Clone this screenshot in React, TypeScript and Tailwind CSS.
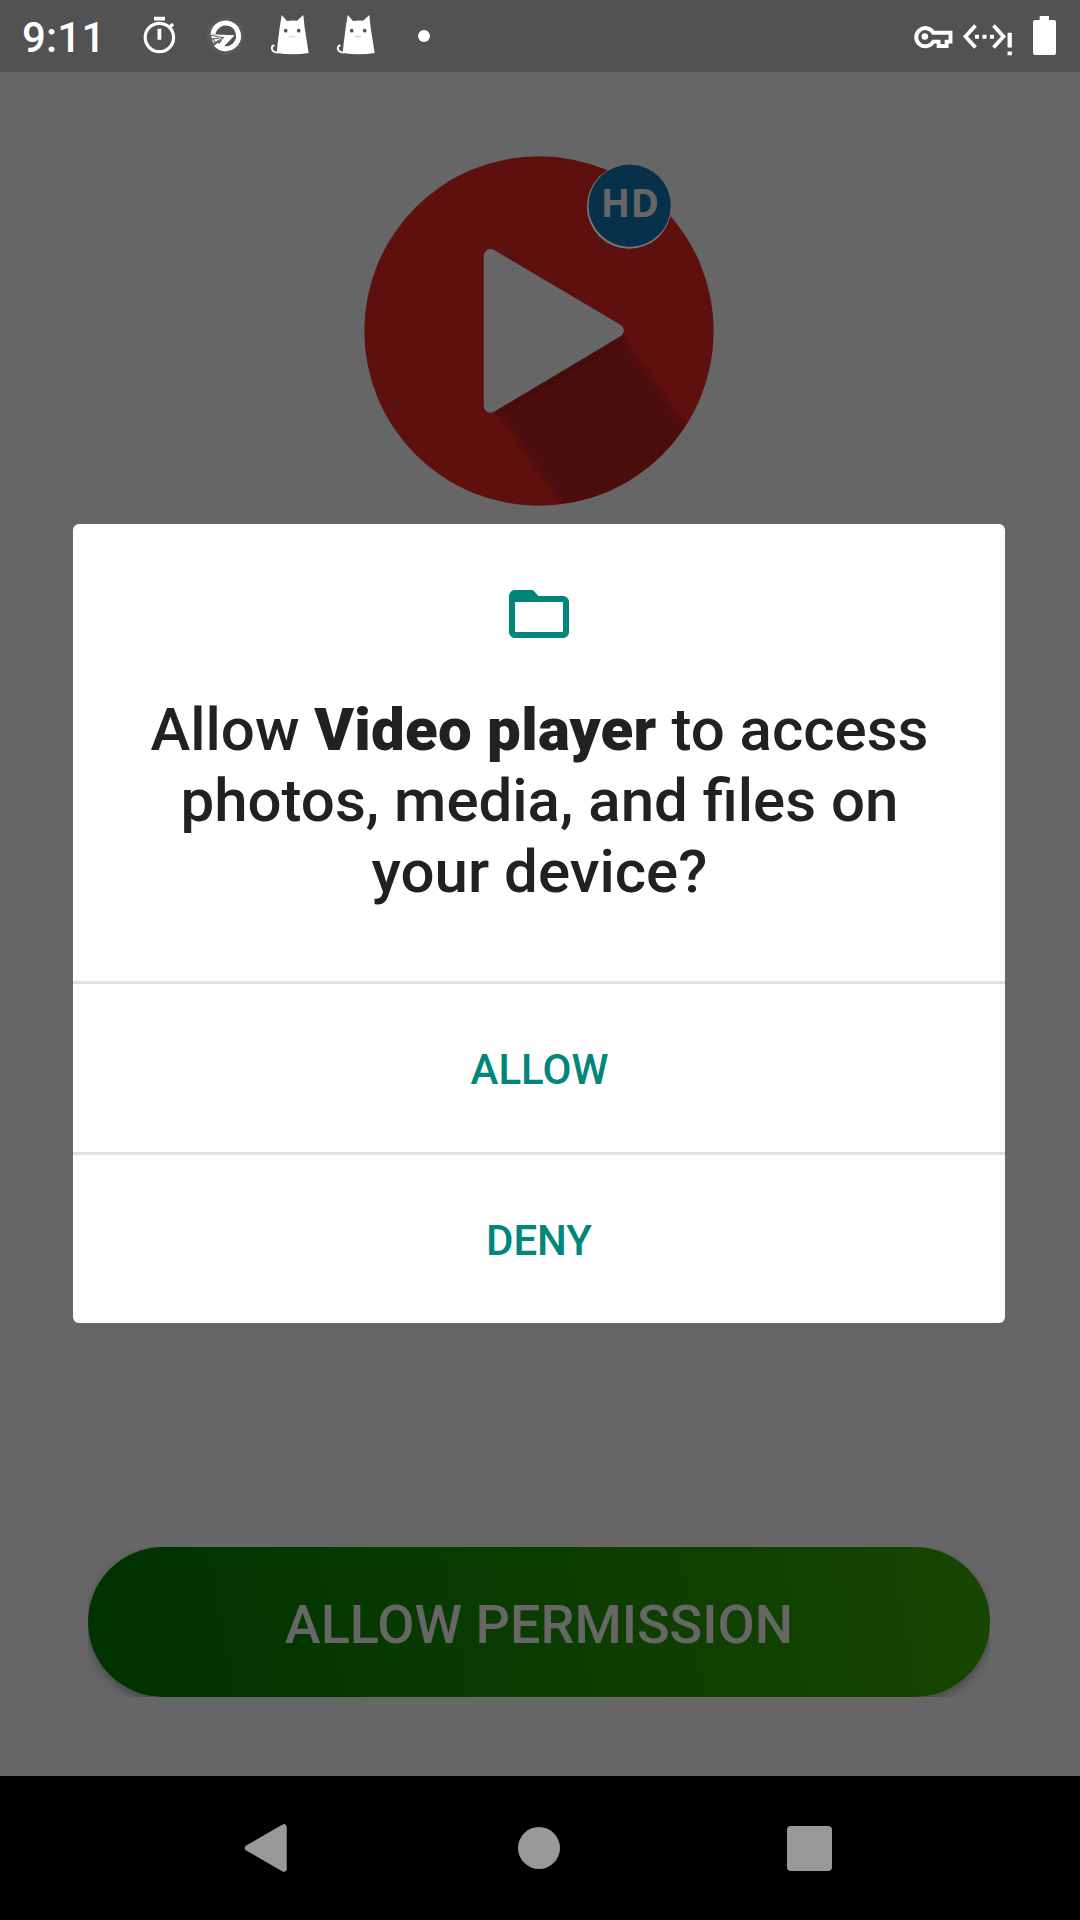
function Cat() {
  return (
    <svg className="h-[44px] w-[40px] shrink-0" viewBox="240 40 120 132">
      <path
        d="M264 158C250 160 243 150 246 142Q248 137 251 138"
        fill="none"
        stroke="#fff"
        strokeWidth="6"
        strokeLinecap="round"
      />
      <path
        d="M275 46L291 64Q306 61 321 63L340 46L344 84L356 160Q310 168 260 160Q264 120 269 84Z"
        fill="#fff"
      />
      <circle cx="287" cy="93" r="5.500" fill="#525252" />
      <circle cx="326" cy="93" r="5.500" fill="#525252" />
      <path d="M298 112Q302 109 307 111Q312 109 316 112" fill="none" stroke="#d4d4d4" strokeWidth="4" />
    </svg>
  );
}

function StatusBar() {
  return (
    <header className="flex h-[72px] shrink-0 items-start bg-[#525252] text-white">
      <span className="ml-[22px] mt-[13px] w-[80px] whitespace-nowrap text-[42px] font-medium leading-[49px] tracking-[0.2px]">
        9:11
      </span>
      <svg className="ml-[36px] mt-[15px] h-[42px] w-[42px] shrink-0" viewBox="0 0 42 42" fill="none" stroke="#fff">
        <circle cx="21.400" cy="22.500" r="14.200" strokeWidth="3.200" />
        <path d="M16 3.700H27M21.400 13.800V24.800" strokeWidth="3.800" />
        <path d="M31 13L35 9" strokeWidth="3.200" />
      </svg>
      <svg className="ml-[25px] mt-[15px] h-[42px] w-[42px] shrink-0 overflow-visible" viewBox="45 45 126 126">
        <defs>
          <radialGradient id="halo">
            <stop offset="0.6" stopColor="#fff" stopOpacity="0.1" />
            <stop offset="1" stopColor="#fff" stopOpacity="0" />
          </radialGradient>
        </defs>
        <circle cx="107" cy="108" r="62" fill="url(#halo)" />
        <circle cx="107" cy="108" r="32" fill="#525252" />
        <path d="M69 102A38.500 38.500 0 1 1 78 133" fill="none" stroke="#fff" strokeWidth="15" />
        <path d="M60 103L134 106L101 140L80 141L99 117L70 131L66 115Z" fill="#fff" />
        <path d="M60 106L101 113L68 131M66 117L88 115M70 117L74 126" fill="none" stroke="#525252" strokeWidth="3" />
      </svg>
      <div className="ml-[23px] mt-[13px] flex gap-[26px]">
        <Cat />
        <Cat />
      </div>
      <span className="ml-[42px] mt-[30px] h-3 w-3 rounded-full bg-white" />
      <svg className="ml-auto mt-[12px] h-[48px] w-[152px] shrink-0" viewBox="10 12 152 48" fill="none" stroke="#fff">
        <path d="M33.300 32.800H50.500V41.600H46.600V46H38.600V41.600H33.300A9.100 9.100 0 1 1 33.300 32.800Z" strokeWidth="3.900" />
        <circle cx="24.800" cy="36.500" r="3.200" fill="#fff" stroke="none" />
        <path d="M75.500 25.500L65.500 36.500L75.500 47.500M93.500 25.500L103.500 36.500L93.500 47.500" strokeWidth="3.800" />
        <path d="M75 36.700H79M82.500 36.700H86.500M90 36.700H94" strokeWidth="4" />
        <path d="M109.700 32.700V47.500M109.700 51.500V55.200" strokeWidth="4.300" />
        <path
          d="M139.700 16H149V20H154Q156 20 156 22V53Q156 55 154 55H135Q133 55 133 53V22Q133 20 135 20H139.700Z"
          fill="#fff"
          stroke="none"
        />
      </svg>
      <span className="w-[18px] shrink-0" />
    </header>
  );
}

function Logo() {
  return (
    <svg className="h-[360px] w-[360px]" viewBox="359 151 360 360">
      <defs>
        <clipPath id="disc">
          <circle cx="539" cy="331" r="174.700" />
        </clipPath>
        <filter id="soft" x="-20%" y="-20%" width="140%" height="140%">
          <feGaussianBlur stdDeviation="1.500" />
        </filter>
      </defs>
      <circle cx="539" cy="331" r="174.700" fill="#5e100e" />
      <g clipPath="url(#disc)">
        <path d="M496 408L622 336L699 446L640 540L587 540Z" fill="#4c0d10" filter="url(#soft)" />
        <path d="M494 413L623 337" stroke="#3f0a0d" strokeWidth="4" filter="url(#soft)" />
      </g>
      <path d="M490.500 255.700L617 330.500L490.500 406Z" fill="#666" stroke="#666" strokeWidth="13.500" strokeLinejoin="round" />
      <circle cx="629.200" cy="206.500" r="42.300" fill="#767676" />
      <circle cx="629.700" cy="205.700" r="41.200" fill="#07304b" />
      <text
        x="630"
        y="217"
        textAnchor="middle"
        fill="#666"
        className="font-['Noto_Sans'] text-[38.5px] font-bold tracking-[0.4px]"
      >
        HD
      </text>
    </svg>
  );
}

function PermissionDialog() {
  return (
    <section
      role="dialog"
      className="absolute left-[73.33px] top-[524px] flex h-[799px] w-[931.33px] flex-col overflow-hidden rounded-[6px] bg-white"
    >
      <div className="flex h-[457px] flex-col items-center">
        <svg className="mt-[54px] h-[72px] w-[72px] shrink-0" viewBox="0 0 24 24" fill="#00867a">
          <path d="M9.700 4H4c-1.100 0-1.990.9-1.990 2L2 18c0 1.100.9 2 2 2h16c1.100 0 2-.9 2-2V8c0-1.100-.9-2-2-2h-8.170L10.300 4.300Q10 4 9.700 4zM20 18H4V8h16z" />
        </svg>
        <h1 className="mt-[44px] pl-[1px] text-center text-[60px] font-medium leading-[71px] text-[#212121]">
          Allow <b className="font-black tracking-[0.25px]">Video player</b> to access
          <br />
          photos, media, and files on
          <br />
          your device?
        </h1>
      </div>
      <button className="h-[171px] border-t-[3px] border-[#e0e0e0] pl-[1px] pt-[2px] text-[42px] font-medium text-[#00867a]">
        ALLOW
      </button>
      <button className="h-[171px] border-t-[3px] border-[#e0e0e0] pt-[2px] text-[42px] font-medium text-[#00867a]">
        DENY
      </button>
    </section>
  );
}

export default function App() {
  return (
    <div className="relative flex h-[1920px] w-[1080px] flex-col overflow-hidden bg-[#666] font-[Roboto,sans-serif]">
      <StatusBar />
      <main className="flex flex-1 flex-col items-center pt-[79px]">
        <div className="mr-[2px]">
          <Logo />
        </div>
        <div className="mb-[79px] mr-[2px] mt-auto h-[150px] w-[902px] overflow-hidden">
          <button className="h-[150px] w-[902px] rounded-full bg-[linear-gradient(80deg,#003300_6%,#174600_98%)] pt-[4px] text-[54px] font-medium text-[#666] shadow-[0_4px_8px_0_rgba(0,0,0,0.3)]">
            ALLOW PERMISSION
          </button>
        </div>
      </main>
      <nav className="flex h-[144px] shrink-0 items-center bg-black">
        <svg className="ml-[244px] h-[50px] w-[44px]" viewBox="0 0 44 50">
          <path d="M3.500 25L40 4V46Z" fill="#999" stroke="#999" strokeWidth="5.500" strokeLinejoin="round" />
        </svg>
        <span className="ml-[230px] h-[42px] w-[42px] rounded-full bg-[#999]" />
        <span className="ml-[226.5px] h-[45px] w-[45px] rounded-[4px] bg-[#999]" />
      </nav>
      <PermissionDialog />
    </div>
  );
}
